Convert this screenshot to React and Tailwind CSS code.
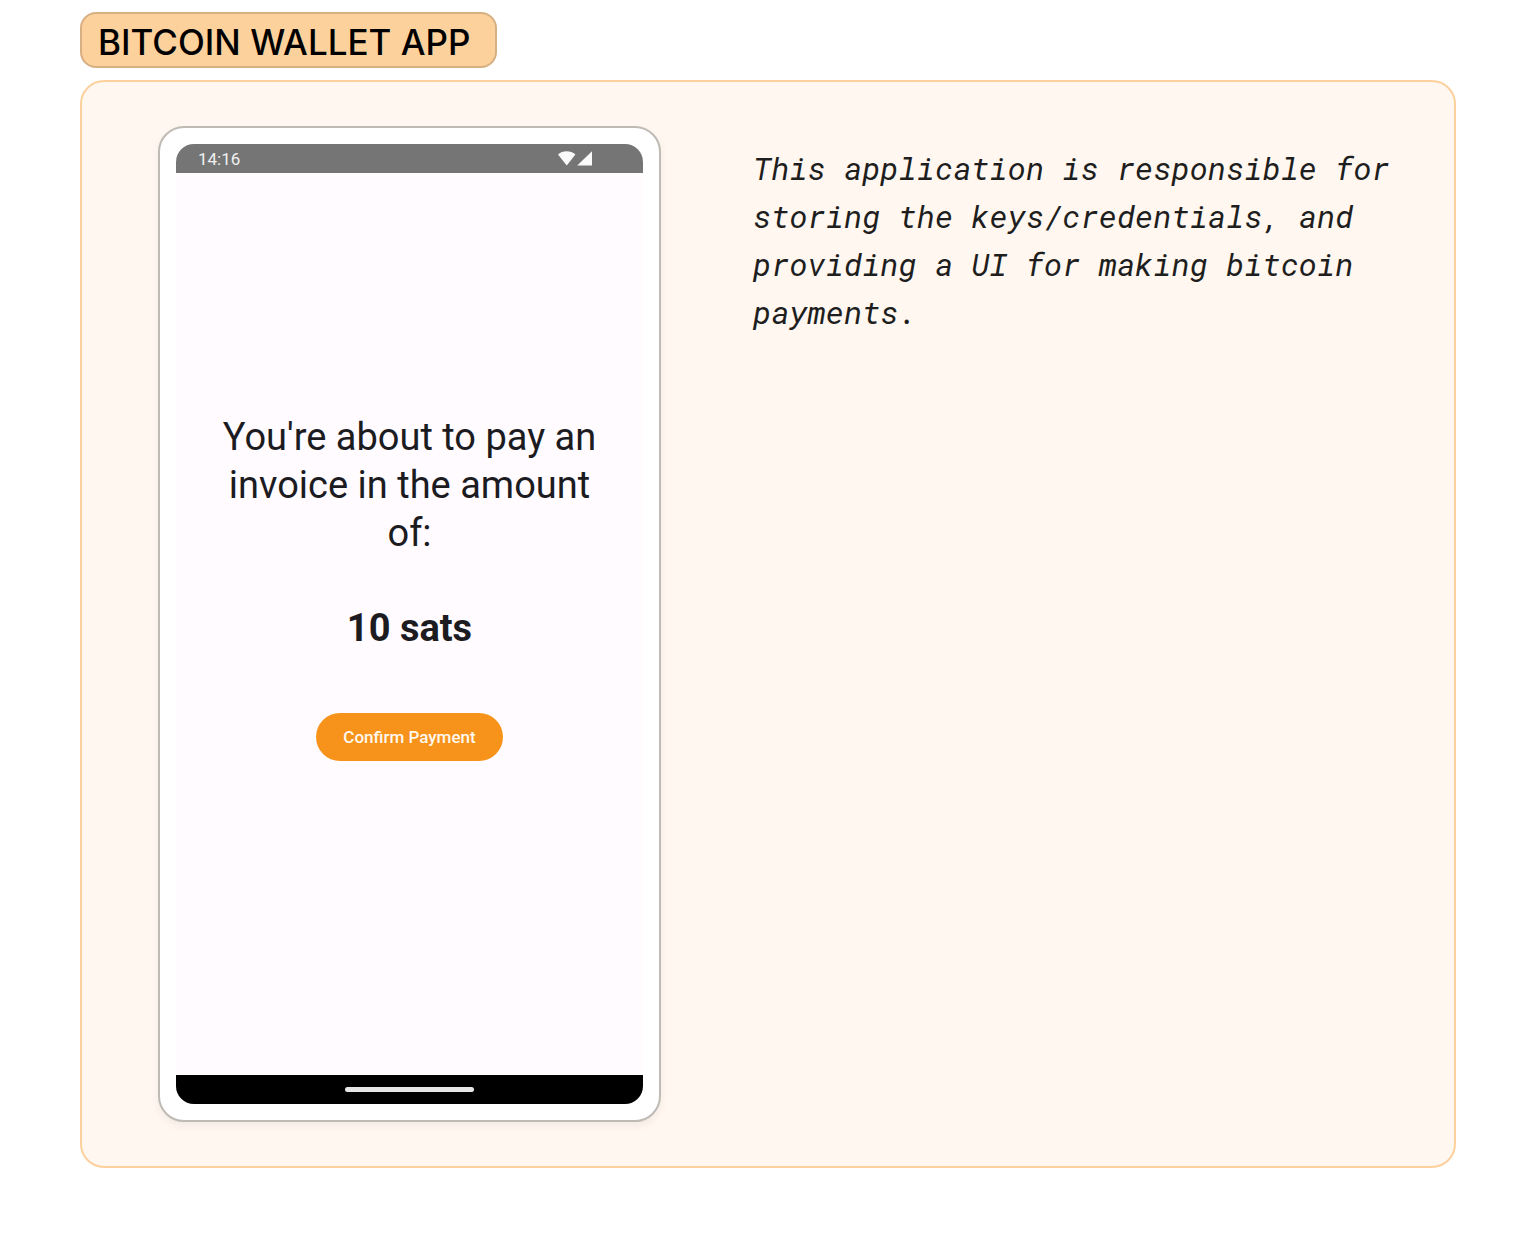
function StatusIcons() {
  return (
    <svg width="36" height="16" viewBox="0 0 36 16" fill="#fafafa" aria-hidden="true">
      <path d="M1 3.6 C5.6 -0.8 13.6 -0.8 18.4 3.6 L9.75 14.6 Z" />
      <path d="M35 0.2 V14.6 H20.2 Z" />
    </svg>
  );
}

function Phone() {
  return (
    <section
      aria-label="Wallet"
      className="w-full max-w-[503px] rounded-[26px] border-2 border-[#bfbab4] bg-white p-4 shadow-[0_4px_8px_rgba(0,0,0,0.06)]"
    >
      <div className="flex flex-col overflow-hidden rounded-[18px] bg-[#fffbff] font-[Roboto,sans-serif] text-[#1c1b1f]">
        <div className="flex h-[29px] items-center justify-between bg-[#757575] pr-[50px] pl-[22px]">
          <span className="text-[17px] leading-[30px] text-[#f0f0f0]">14:16</span>
          <StatusIcons />
        </div>
        <div className="flex flex-col items-center px-8 pt-60 pb-[314px] text-center text-[38px] leading-[48px]">
          <p>You're about to pay an invoice in the amount of:</p>
          <p className="mt-[47px] font-bold">10 sats</p>
          <button
            type="button"
            className="mt-[61px] h-12 rounded-full bg-[#f7931a] px-[27px] text-[17px] leading-6 font-medium text-[#fff8ee]"
          >
            Confirm Payment
          </button>
        </div>
        <div className="flex h-[29px] items-center justify-center bg-black">
          <div className="h-[5px] w-[129px] rounded-full bg-[#e6e6e6]" />
        </div>
      </div>
    </section>
  );
}

export default function App() {
  return (
    <main className="min-h-screen bg-white px-20 pt-3 pb-20">
      <h1 className="w-fit rounded-2xl border-2 border-[#d6b083] bg-[#fdd19c] pt-1 pr-6 pl-4 font-[Inter,sans-serif] text-[35px] leading-[48px] font-medium text-black">
        BITCOIN WALLET APP
      </h1>
      <div className="mt-3 grid grid-cols-2 gap-4 rounded-3xl border-2 border-[#fdd19c] bg-[#fff7f0] py-11 pr-[46px]">
        <div className="flex justify-center">
          <Phone />
        </div>
        <p className="pt-[18px] font-['Roboto_Mono','Liberation_Mono',monospace] text-[31px] leading-[48px] text-[#1e1e1e] italic">
          This application is responsible for storing the keys/credentials, and providing a UI for making bitcoin
          payments.
        </p>
      </div>
    </main>
  );
}
